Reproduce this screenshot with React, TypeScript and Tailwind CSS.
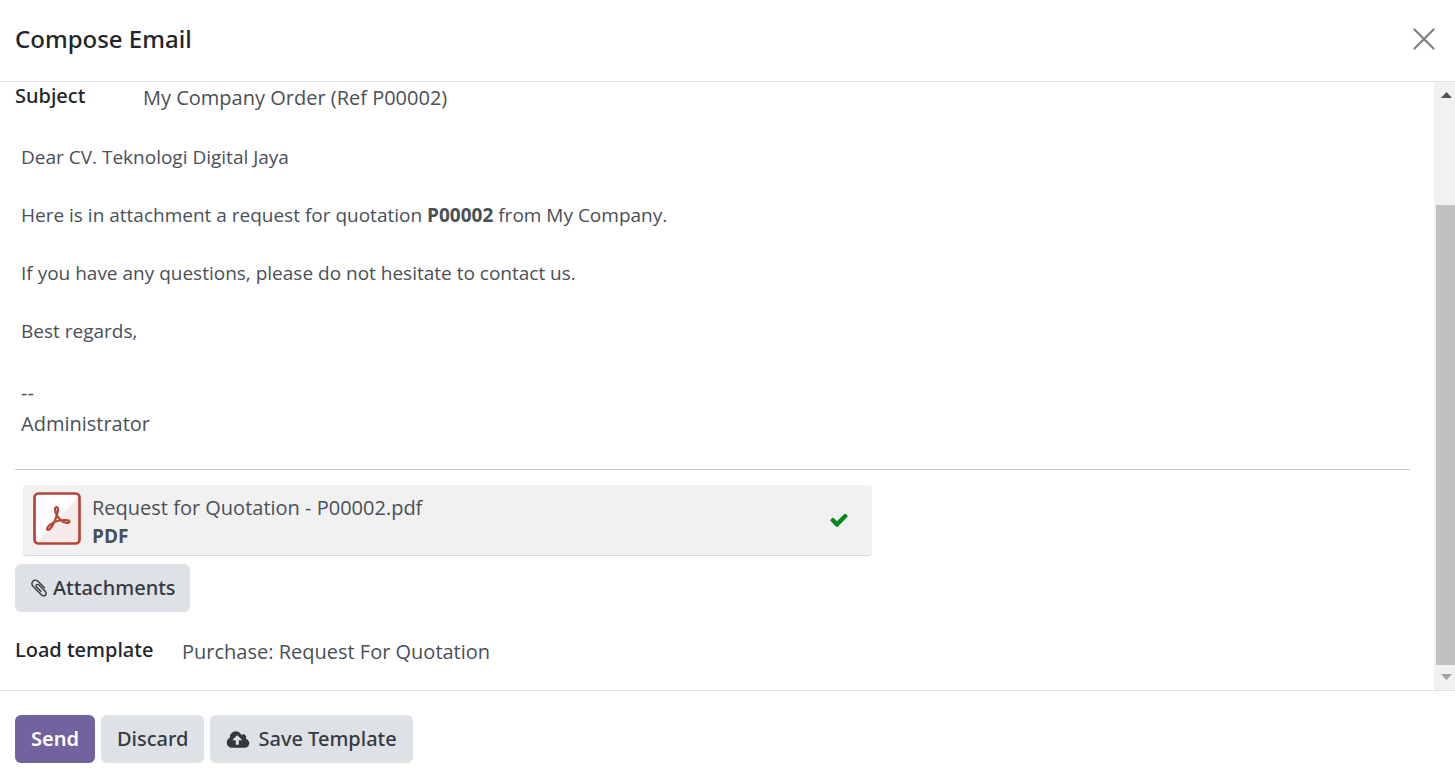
import React, { useState } from "react";

interface IconProps {
  className?: string;
}

const PaperclipIcon: React.FC<IconProps> = ({ className }) => (
  <svg viewBox="0 0 1792 1792" fill="currentColor" className={className} aria-hidden="true">
    <path d="M1596 1385q0 117-79 196t-196 79q-135 0-235-100l-777-776q-113-115-113-271 0-159 110-270t269-111q158 0 273 113l605 606q10 10 10 22 0 16-30.5 46.5t-46.5 30.5q-13 0-23-10l-606-607q-79-77-181-77-106 0-179 75t-73 181q0 105 76 181l776 777q63 63 145 63 64 0 106-42t42-106q0-82-63-145l-581-581q-26-24-60-24-29 0-48 19t-19 48q0 32 25 59l410 410q10 10 10 22 0 16-31 47t-47 31q-12 0-22-10l-410-410q-63-61-63-149 0-82 57-139t139-57q88 0 149 63l581 581q100 98 100 235z" />
  </svg>
);

const CloudUploadIcon: React.FC<IconProps> = ({ className }) => (
  <svg viewBox="0 0 1920 1792" fill="currentColor" className={className} aria-hidden="true">
    <path d="M1280 928q0-14-9-23l-352-352q-9-9-23-9t-23 9l-351 351q-10 12-10 24 0 14 9 23t23 9h224v352q0 13 9.5 22.5t22.5 9.5h192q13 0 22.5-9.5t9.5-22.5v-352h224q13 0 22.5-9.5t9.5-22.5zm640 288q0 159-112.5 271.5t-271.5 112.5h-1088q-185 0-316.5-131.5t-131.5-316.5q0-130 70-240t188-165q-2-30-2-43 0-212 150-362t362-150q156 0 285.5 87t188.5 231q71-62 166-62 106 0 181 75t75 181q0 76-41 138 130 31 213.5 135.5t83.5 238.5z" />
  </svg>
);

const CheckIcon: React.FC<IconProps> = ({ className }) => (
  <svg viewBox="0 0 1792 1792" fill="currentColor" className={className} aria-hidden="true">
    <path d="M1671 566q0 40-28 68l-724 724-136 136q-28 28-68 28t-68-28l-136-136-362-362q-28-28-28-68t28-68l136-136q28-28 68-28t68 28l294 295 656-657q28-28 68-28t68 28l136 136q28 28 28 68z" />
  </svg>
);

const CloseIcon: React.FC<IconProps> = ({ className }) => (
  <svg viewBox="0 0 22 22" fill="none" stroke="currentColor" className={className} aria-hidden="true">
    <path d="M1.5 1.5l19 19M20.5 1.5l-19 19" strokeWidth="2.2" strokeLinecap="round" />
  </svg>
);

const PdfIcon: React.FC<IconProps> = ({ className }) => (
  <svg viewBox="0 0 48 53" fill="none" className={className} aria-hidden="true">
    <rect x="1.5" y="1.5" width="45" height="50" rx="4" fill="#fff" />
    <path d="M46 4V48a3 3 0 0 1-3 3H3z" fill="#f7eaea" />
    <rect x="1.5" y="1.5" width="45" height="50" rx="4" stroke="#b64536" strokeWidth="2.7" />
    <path
      d="M23.800 15c-2.400 0-2.200 4.200-.2 7.900 2.400 4.200 5.800 7.200 9.200 7.800 4.800.8 4.800-2.600.2-2.700-5-.1-11.400 1.300-15.400 4.300-4.400 3.300-4.200 5.600-2.400 5.500 2.600-.2 6.500-7.500 8.600-14.400 1.500-5 1.600-8.400 0-8.400z"
      stroke="#b64536"
      strokeWidth="2.200"
      strokeLinejoin="round"
    />
  </svg>
);

const Scrollbar: React.FC = () => (
  <div className="flex w-[21px] shrink-0 flex-col bg-[#f1f1f1] pl-[2px]" aria-hidden="true">
    <svg viewBox="0 0 19 25" className="h-[25px] w-[19px]">
      <path d="M5 16h11l-5.500-6z" fill="#505050" />
    </svg>
    <div className="flex min-h-0 flex-1 flex-col">
      <div className="flex-[98]" />
      <div className="flex-[460] bg-[#c1c1c1]" />
    </div>
    <svg viewBox="0 0 19 25" className="h-[25px] w-[19px]">
      <path d="M5 9h11l-5.500 6z" fill="#a3a3a3" />
    </svg>
  </div>
);

const App: React.FC = () => {
  const [subject, setSubject] = useState("My Company Order (Ref P00002)");
  const [template, setTemplate] = useState("Purchase: Request For Quotation");

  return (
    <div className="flex h-screen flex-col bg-white font-['Open_Sans',sans-serif] text-[20px] text-[#495057]">
      <header className="flex h-[82px] shrink-0 items-center justify-between border-b border-[#dee2e6] pr-5 pb-1 pl-[15px]">
        <h1 className="font-['Noto_Sans',sans-serif] text-[24px] font-medium text-[#212529]">
          Compose Email
        </h1>
        <button type="button" aria-label="Close" className="text-[#7f7f7f]">
          <CloseIcon className="size-[22px]" />
        </button>
      </header>

      <div className="flex min-h-0 flex-1">
        <main className="min-w-0 flex-1 overflow-hidden pr-6 pl-[15px]">
          <div className="flex items-start">
            <label
              htmlFor="subject"
              className="w-32 shrink-0 font-['Noto_Sans',sans-serif] leading-[27px] font-medium text-[#212529]"
            >
              Subject
            </label>
            <input
              id="subject"
              type="text"
              value={subject}
              onChange={(e) => setSubject(e.target.value)}
              className="h-[31px] min-w-0 flex-1 outline-none"
            />
          </div>

          <div className="mt-[30px] border-b border-[#c8cbce] px-[6px] pb-[30px]">
            <div className="space-y-[29px] text-[19px] leading-[29px]">
              <p>Dear CV. Teknologi Digital Jaya</p>
              <p>
                Here is in attachment a request for quotation{" "}
                <strong>P00002</strong> from My Company.
              </p>
              <p>If you have any questions, please do not hesitate to contact us.</p>
              <p>Best regards,</p>
            </div>
            <p className="mt-[31px] leading-[31px]">
              --
              <br />
              Administrator
            </p>
          </div>

          <div className="mt-[15px] ml-2 flex h-[71px] max-w-[849px] items-center rounded-[4px] border-b border-[#d8d8d8] bg-[#f1f1f1] pr-[23px] pl-[10px]">
            <PdfIcon className="mb-1 h-[53px] w-12 shrink-0" />
            <div className="ml-[11px] min-w-0 flex-1 pt-1 leading-[29px]">
              <p className="truncate">Request for Quotation - P00002.pdf</p>
              <p className="text-[19px] font-bold">PDF</p>
            </div>
            <CheckIcon className="size-5 shrink-0 text-[#008818]" />
          </div>

          <button
            type="button"
            className="mt-2 flex h-12 items-center gap-1 rounded-[6px] bg-[#dee2e6] px-[14px] font-['Noto_Sans',sans-serif] font-medium text-[#343a40]"
          >
            <PaperclipIcon className="size-5" />
            Attachments
          </button>

          <div className="mt-6 flex items-start">
            <label
              htmlFor="template"
              className="w-[167px] shrink-0 font-['Noto_Sans',sans-serif] leading-[27px] font-medium text-[#212529]"
            >
              Load template
            </label>
            <input
              id="template"
              type="text"
              value={template}
              onChange={(e) => setTemplate(e.target.value)}
              className="h-[31px] min-w-0 flex-1 outline-none"
            />
          </div>
        </main>
        <Scrollbar />
      </div>

      <footer className="flex shrink-0 gap-[6px] border-t border-[#dee2e6] px-[15px] pt-6 pb-4 font-['Noto_Sans',sans-serif] font-medium">
        <button type="button" className="h-12 rounded-[6px] bg-[#71639e] px-4 font-semibold text-white">
          Send
        </button>
        <button type="button" className="h-12 rounded-[6px] bg-[#dee2e6] px-4 text-[#343a40]">
          Discard
        </button>
        <button
          type="button"
          className="flex h-12 items-center gap-2 rounded-[6px] bg-[#dee2e6] px-4 text-[#343a40]"
        >
          <CloudUploadIcon className="h-[21px] w-6" />
          Save Template
        </button>
      </footer>
    </div>
  );
};

export default App;
